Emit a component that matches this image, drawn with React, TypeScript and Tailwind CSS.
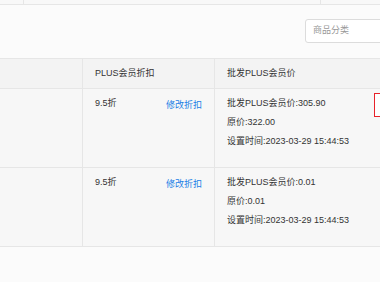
import React from "react";

const font = "font-['Liberation_Sans','Noto_Sans_CJK_SC',sans-serif]";

const rows = [
  { rate: "9.5折", plus: "305.90", origin: "322.00", time: "2023-03-29 15:44:53", action: true },
  { rate: "9.5折", plus: "0.01", origin: "0.01", time: "2023-03-29 15:44:53", action: false },
];

const App = () => {
  return (
    <div className={`w-[380px] h-[282px] overflow-hidden bg-[#fbfbfb] text-[#333] text-[9px] ${font}`}>
      {/* tail of the block above */}
      <div className="flex h-[5px] border-b border-[#e6e6e6] bg-[#f8f8f8]">
        <div className="w-[24px] shrink-0 border-r border-[#e6e6e6]" />
        <div className="w-[297px] shrink-0 border-r border-[#e6e6e6]" />
        <div className="flex-1" />
      </div>

      {/* filter */}
      <div className="flex pl-[305px] pt-[14px] pb-[15px]">
        <div className="flex items-center w-[100px] h-[24px] shrink-0 pl-[7px] border border-[#dcdcdc] rounded-[3px] bg-white text-[#999]">
          商品分类
        </div>
      </div>

      {/* table */}
      <div className="border-t border-[#e6e6e6]">
        <div className="flex h-[30px] bg-[#f3f3f3] border-b border-[#e6e6e6]">
          <div className="w-[83px] shrink-0 border-r border-[#e6e6e6]" />
          <div className="w-[132px] shrink-0 flex items-center pl-[12px] border-r border-[#e6e6e6]">
            PLUS会员折扣
          </div>
          <div className="flex-1 flex items-center pl-[12px]">批发PLUS会员价</div>
        </div>

        {rows.map((r, i) => (
          <div key={i} className="flex h-[79px] bg-[#f7f7f7] border-b border-[#e6e6e6]">
            <div className="w-[83px] shrink-0 border-r border-[#e6e6e6]" />
            <div className="w-[132px] shrink-0 flex justify-between items-start pt-[5px] pl-[12px] pr-[12px] border-r border-[#e6e6e6] leading-[19px]">
              <span>{r.rate}</span>
              <span className="mt-[2px] text-[#1a7ee6] cursor-pointer">修改折扣</span>
            </div>
            <div className="flex-1 flex items-start pt-[5px] pl-[12px]">
              <div className="w-[147px] shrink-0 leading-[19px]">
                <p>批发PLUS会员价:{r.plus}</p>
                <p>原价:{r.origin}</p>
                <p className="whitespace-nowrap">设置时间:{r.time}</p>
              </div>
              {r.action && (
                <div className="mt-[-1px] w-[40px] h-[24px] shrink-0 border border-[#e8222a] bg-white" />
              )}
            </div>
          </div>
        ))}
      </div>
    </div>
  );
};

export default App;
